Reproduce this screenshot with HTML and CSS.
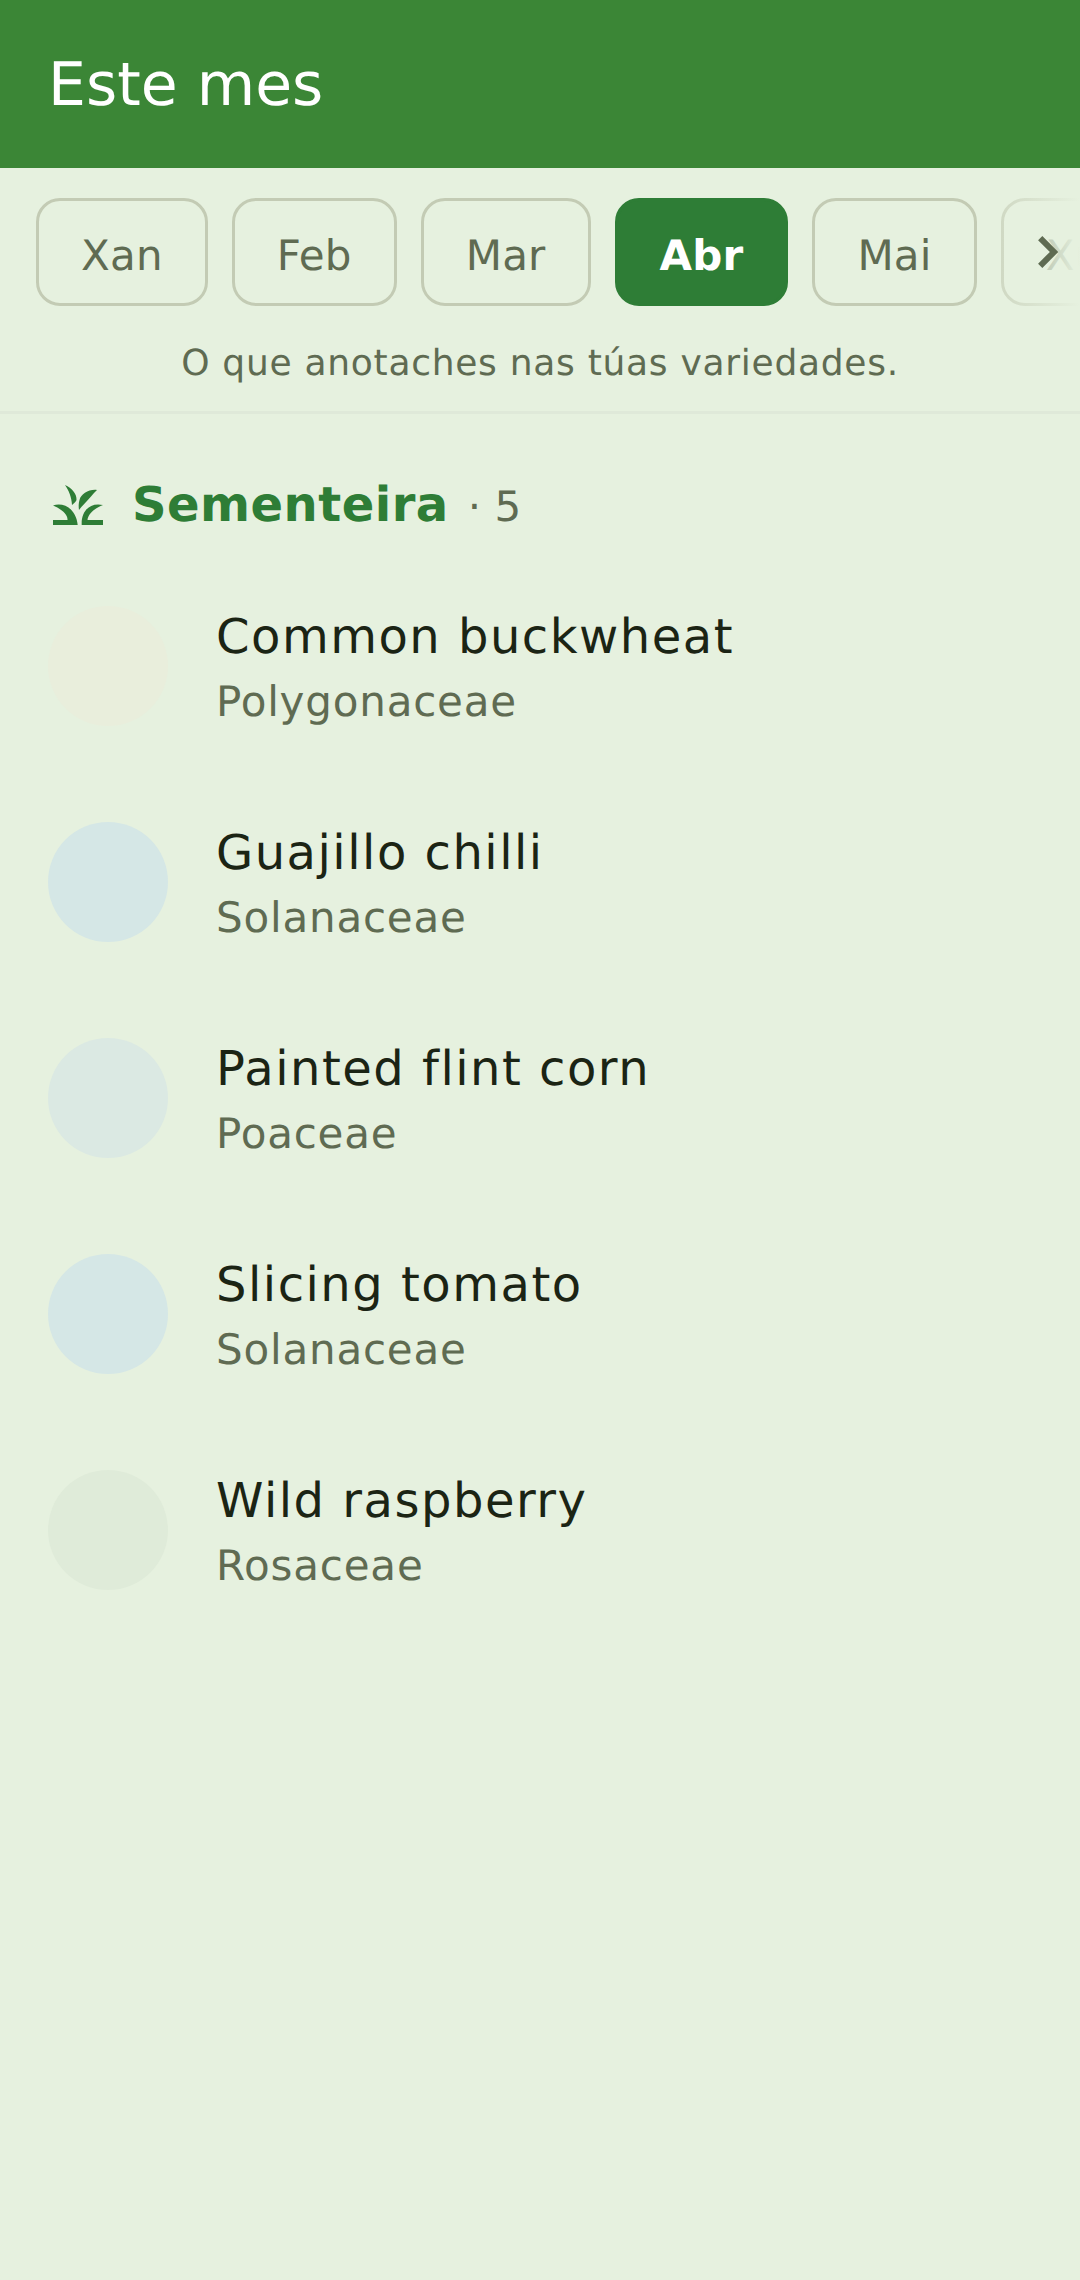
FILE: index.html
```html
<!DOCTYPE html>
<html lang="gl">
<head>
  <meta charset="UTF-8">
  <title>Este mes</title>
  <link rel="stylesheet" href="styles.css">
</head>
<body>
  <header class="topbar">
    <h1>Este mes</h1>
  </header>

  <section class="months">
    <div class="chips-wrap">
      <div class="chips">
        <span class="chip">Xan</span>
        <span class="chip">Feb</span>
        <span class="chip">Mar</span>
        <span class="chip active">Abr</span>
        <span class="chip">Mai</span>
        <span class="chip">Xuñ</span>
      </div>
      <div class="fade"></div>
      <svg class="chevron" width="20" height="32" viewBox="0 0 20 32">
        <path d="M2.2 2.2 L16 16 L2.2 29.8" fill="none" stroke="#5f6b52" stroke-width="6"/>
      </svg>
    </div>
    <p class="hint">O que anotaches nas túas variedades.</p>
  </section>

  <section class="group">
    <div class="group-head">
      <svg class="sprout" width="50" height="40" viewBox="0 0 50 40">
        <path d="M12 0 C19 3 24 9 23.500 15 C23 17 21 18 19 20 C18.500 12 16 6 12 0 Z" fill="#2e7d36"/>
        <path d="M44 5 C36 4 28 9 26.500 15 C25.500 18 25.500 22 26 25 C29 21 34 16 38 11.500 C40 9 42 7 44 5 Z" fill="#2e7d36"/>
        <path d="M0 20.500 C10 17 23 23 24.700 40 L0 40 L0 35 L14.500 35 C15 29 8 24 0 20.500 Z" fill="#2e7d36"/>
        <path d="M50 20 C37 17 28 26 28.700 40 L50 40 L50 35 L34.500 35 C35 29 42 23 50 20 Z" fill="#2e7d36"/>
      </svg>
      <div class="group-label">
        <span class="group-title">Sementeira</span>
        <span class="group-count">· 5</span>
      </div>
    </div>

    <ul class="plants">
      <li class="plant">
        <div class="thumb sand"></div>
        <div class="plant-text"><div class="name">Common buckwheat</div><div class="family">Polygonaceae</div></div>
      </li>
      <li class="plant">
        <div class="thumb blue"></div>
        <div class="plant-text"><div class="name">Guajillo chilli</div><div class="family">Solanaceae</div></div>
      </li>
      <li class="plant">
        <div class="thumb mist"></div>
        <div class="plant-text"><div class="name">Painted flint corn</div><div class="family">Poaceae</div></div>
      </li>
      <li class="plant">
        <div class="thumb blue"></div>
        <div class="plant-text"><div class="name">Slicing tomato</div><div class="family">Solanaceae</div></div>
      </li>
      <li class="plant">
        <div class="thumb leaf"></div>
        <div class="plant-text"><div class="name">Wild raspberry</div><div class="family">Rosaceae</div></div>
      </li>
    </ul>
  </section>
</body>
</html>
```
FILE: styles.css
```css
* {
  box-sizing: border-box;
}

body {
  font-family: 'DejaVu Sans', sans-serif;
  text-rendering: geometricPrecision;
  background: #e6f1df;
  margin: 0;
  min-height: 100vh;
}

.topbar {
  background: #3b8636;
  height: 168px;
  padding: 2px 0 0 48px;
  display: flex;
  align-items: center;
}

.topbar h1 {
  margin: 0;
  color: #fff;
  font-size: 60px;
  font-weight: 400;
}

.months {
  border-bottom: 3px solid #dfe9d9;
  padding-top: 30px;
  height: 246px;
}

.chips-wrap {
  position: relative;
  overflow: hidden;
}

.chips {
  display: flex;
  gap: 24px;
  padding-left: 36px;
}

.chip {
  flex: none;
  height: 108px;
  padding: 6px 42px 0;
  border: 3px solid #c3cbb4;
  border-radius: 24px;
  color: #5f6b52;
  font-size: 42px;
  letter-spacing: 0.2px;
  display: flex;
  align-items: center;
}

.chip.active {
  background: #2e7d36;
  border-color: #2e7d36;
  color: #fff;
  font-weight: 700;
}

.fade {
  position: absolute;
  top: 0;
  right: 0;
  width: 80px;
  height: 108px;
  background: linear-gradient(90deg, rgba(230, 241, 223, 0.35), #e6f1df);
}

.chevron {
  position: absolute;
  top: 38px;
  right: 22px;
}

.hint {
  margin: 37px 0 0;
  text-align: center;
  color: #5f6b52;
  font-size: 36px;
  letter-spacing: 0.72px;
}

.group {
  padding-top: 61px;
}

.group-head {
  display: flex;
  align-items: center;
  gap: 29px;
  padding-left: 53px;
  height: 60px;
  margin-bottom: 23px;
}

.group-label {
  display: flex;
  align-items: baseline;
  gap: 19px;
}

.group-title {
  color: #2e7d36;
  font-size: 48px;
  font-weight: 700;
  letter-spacing: 0.48px;
}

.group-count {
  color: #5f6b52;
  font-size: 42px;
}

.plants {
  list-style: none;
  margin: 0;
  padding: 0;
}

.plant {
  display: flex;
  align-items: center;
  gap: 48px;
  height: 216px;
  padding-left: 48px;
}

.thumb {
  width: 120px;
  height: 120px;
  border-radius: 50%;
}

.sand { background: #e9eedc; }
.blue { background: #d5e7e6; }
.mist { background: #dbe9e3; }
.leaf { background: #dfebd9; }

.plant-text {
  padding-top: 2px;
}

.name {
  color: #1b2414;
  font-size: 48px;
  line-height: 69px;
  letter-spacing: 1.5px;
}

.family {
  color: #5f6b52;
  font-size: 42px;
  line-height: 60px;
  letter-spacing: 0.8px;
}
```
